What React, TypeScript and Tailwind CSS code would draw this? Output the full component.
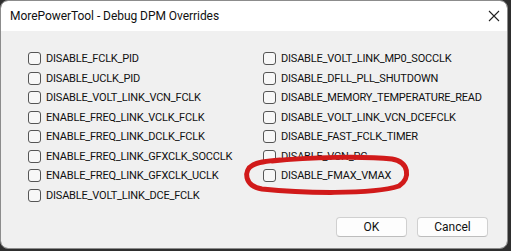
import React from "react";

const left = [
  "DISABLE_FCLK_PID",
  "DISABLE_UCLK_PID",
  "DISABLE_VOLT_LINK_VCN_FCLK",
  "ENABLE_FREQ_LINK_VCLK_FCLK",
  "ENABLE_FREQ_LINK_DCLK_FCLK",
  "ENABLE_FREQ_LINK_GFXCLK_SOCCLK",
  "ENABLE_FREQ_LINK_GFXCLK_UCLK",
  "DISABLE_VOLT_LINK_DCE_FCLK",
];
const right = [
  "DISABLE_VOLT_LINK_MP0_SOCCLK",
  "DISABLE_DFLL_PLL_SHUTDOWN",
  "DISABLE_MEMORY_TEMPERATURE_READ",
  "DISABLE_VOLT_LINK_VCN_DCEFCLK",
  "DISABLE_FAST_FCLK_TIMER",
  "DISABLE_VCN_PG",
  "DISABLE_FMAX_VMAX",
];

function Row({ label }: { label: string }) {
  return (
    <div className="flex h-[19.5px] items-center">
      <div className="h-[13px] w-[13px] shrink-0 rounded-[3px] border border-[#555] bg-[#f7f7f7]" />
      <span className="ml-[5px] whitespace-nowrap text-[11px] leading-none tracking-[-0.2px] text-[#111]">{label}</span>
    </div>
  );
}

export default function App() {
  return (
    <div
      className="relative h-[251px] w-[511px] overflow-hidden bg-[#2e2e2e]"
      style={{ fontFamily: "Roboto, 'Liberation Sans', sans-serif" }}
    >
      <div className="flex h-[249px] w-[508px] flex-col overflow-hidden rounded-[8px] border border-[#8c8c8c]">
        <div className="flex h-[30px] shrink-0 items-center justify-between bg-white pl-[9px] pr-[6px]">
          <span className="text-[12px] tracking-[-0.05px] text-[#111]">MorePowerTool - Debug DPM Overrides</span>
          <svg width="12" height="12" viewBox="0 0 12 12" className="mr-[1px]">
            <path d="M1 1 L11 11 M11 1 L1 11" stroke="#222" strokeWidth="1.1" />
          </svg>
        </div>
        <div className="flex flex-1 flex-col bg-[#f0f0f0] pb-[11px] pt-[18px]">
          <div className="flex pl-[27px]">
            <div className="flex w-[235px] flex-col">
              {left.map((l) => (
                <Row key={l} label={l} />
              ))}
            </div>
            <div className="flex flex-col">
              {right.map((l) => (
                <Row key={l} label={l} />
              ))}
            </div>
          </div>
          <div className="mt-auto flex justify-end gap-[10px] pr-[19px]">
            <button className="h-[20px] w-[71px] rounded-[4px] border border-[#d0d0d0] border-b-[#bdbdbd] bg-[#fdfdfd] text-[12px] leading-none text-[#111]">
              OK
            </button>
            <button className="h-[20px] w-[71px] rounded-[4px] border border-[#d0d0d0] border-b-[#bdbdbd] bg-[#fdfdfd] text-[12px] leading-none text-[#111]">
              Cancel
            </button>
          </div>
        </div>
      </div>
      <svg className="pointer-events-none absolute left-0 top-0" width="511" height="251">
        <path
          d="M272 161 C310 157 365 156 392 159 C409 162 411 178 399 186 C372 195 300 193 262 189 C244 186 243 170 253 165 C258 162 266 161 280 160"
          fill="none"
          stroke="#d11a1a"
          strokeWidth="5"
          strokeLinecap="round"
        />
      </svg>
    </div>
  );
}
